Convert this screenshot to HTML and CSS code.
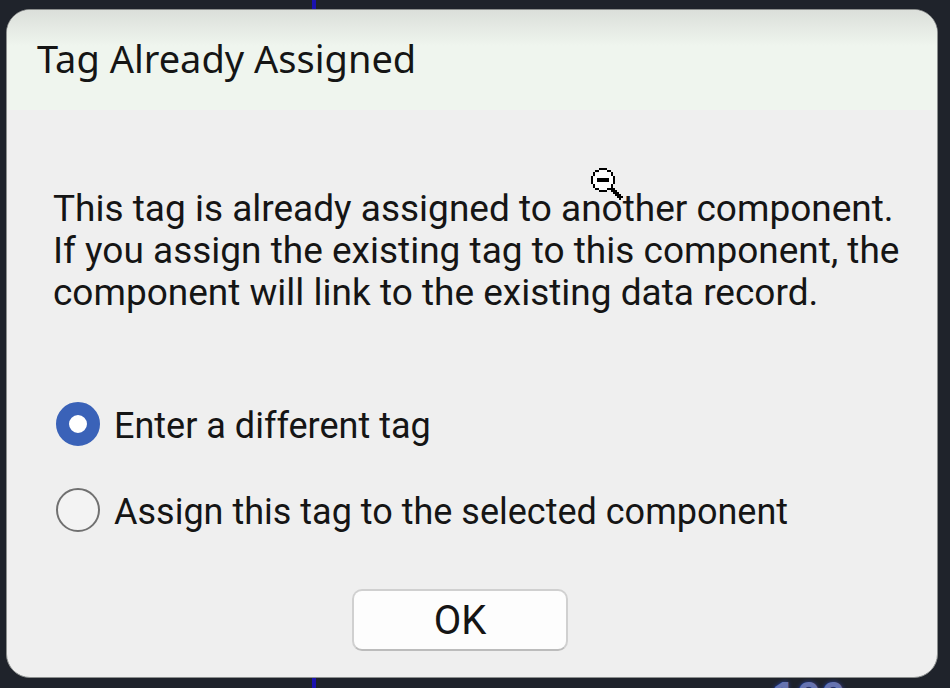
FILE: index.html
```html
<!DOCTYPE html>
<html lang="en">
<head>
    <meta charset="UTF-8">
    <meta name="viewport" content="width=device-width, initial-scale=1.0">
    <title>Tag Already Assigned</title>
    <link rel="stylesheet" href="styles.css">
</head>
<body>
    <!-- Drawing canvas behind the dialog -->
    <div class="wire"></div>
    <div class="wire-label">100</div>

    <form class="dialog" role="dialog" aria-labelledby="dialog-title">
        <h1 class="title" id="dialog-title">Tag Already Assigned</h1>

        <div class="content">
            <p class="message">
                This tag is already assigned to another component.<br>
                If you assign the existing tag to this component, the<br>
                component will link to the existing data record.
            </p>

            <div class="option">
                <input type="radio" name="action" id="different" checked>
                <label for="different">Enter a different tag</label>
            </div>
            <div class="option">
                <input type="radio" name="action" id="assign">
                <label for="assign">Assign this tag to the selected component</label>
            </div>

            <button class="ok" type="button">OK</button>
        </div>
    </form>

    <!-- Zoom out cursor -->
    <svg class="cursor" width="32" height="32" viewBox="0 0 32 32" shape-rendering="crispEdges">
        <path d="M8 1h8v2h4v4h2v2h1v6h-1v2h-2v4h-4v2H8v-2H4v-4H2V9h2V5h4z" fill="#fff"/>
        <path d="M8 0h8v2H8zM4 2h4v2H4zM16 2h4v2h-4zM2 4h2v4H2zM20 4h2v4h-2zM0 8h2v8H0zM22 8h2v8h-2zM2 16h2v4H2zM20 16h2v4h-2zM4 20h4v2H4zM16 20h4v2h-4zM8 22h8v2H8z"/>
        <path d="M6 10h12v4H6zM20 20h4v2h2v2h2v2h2v2h2v2h-2v2h-2v-2h-2v-2h-2v-2h-2v-2h-2z"/>
    </svg>
</body>
</html>
```
FILE: styles.css
```css
* {
    box-sizing: border-box;
}
body {
    margin: 0;
    min-height: 100vh;
    padding: 9px 12px 10px 6px;
    display: flex;
    position: relative;
    overflow: hidden;
    background-color: #1f232b;
    font-family: Roboto, "Liberation Sans", sans-serif;
    font-size: 36px;
    color: #151515;
}
.wire {
    position: absolute;
    top: 0;
    bottom: 0;
    left: 312px;
    width: 4px;
    background-color: #1a12b0;
}
.wire-label {
    position: absolute;
    top: 100%;
    left: 772px;
    margin-top: -14px;
    font-family: "Liberation Sans", sans-serif;
    font-size: 44px;
    font-weight: bold;
    line-height: 48px;
    color: #6673b0;
    text-shadow: 0 0 4px #2a3f9c;
}
.dialog {
    position: relative;
    flex: 1;
    display: flex;
    flex-direction: column;
    overflow: hidden;
    border: 1px solid #8c8f8e;
    border-radius: 24px;
    background-color: #efefef;
}
.title {
    margin: 0;
    padding: 23px 30px 27px;
    background: linear-gradient(#dbdfda, #eff5ee 36px);
    font-family: "Noto Sans", "Open Sans", sans-serif;
    font-size: 38px;
    font-weight: normal;
    line-height: 50px;
}
.content {
    flex: 1;
    display: flex;
    flex-direction: column;
    padding: 78px 70px 26px 46px;
}
.message {
    margin: 0 0 88px;
    font-size: 37px;
    line-height: 42px;
    white-space: nowrap;
}
.option {
    display: flex;
    align-items: center;
    gap: 14px;
    margin-bottom: 38px;
    line-height: 48px;
    white-space: nowrap;
}
.option input {
    appearance: none;
    flex: none;
    width: 44px;
    height: 44px;
    margin: 0 0 4px 3px;
    border: 2px solid #707070;
    border-radius: 50%;
    background-color: #f3f3f3;
}
.option input:checked {
    border: 13px solid #3a62b8;
    background-color: #fff;
}
.ok {
    align-self: center;
    width: 216px;
    height: 62px;
    margin-top: auto;
    padding: 0;
    border: 2px solid #d0d0d0;
    border-bottom-color: #bcbcbc;
    border-radius: 10px;
    background-color: #fdfdfd;
    font-family: inherit;
    font-size: 40px;
    color: inherit;
}
.cursor {
    position: absolute;
    top: 168px;
    left: 591px;
}
```
